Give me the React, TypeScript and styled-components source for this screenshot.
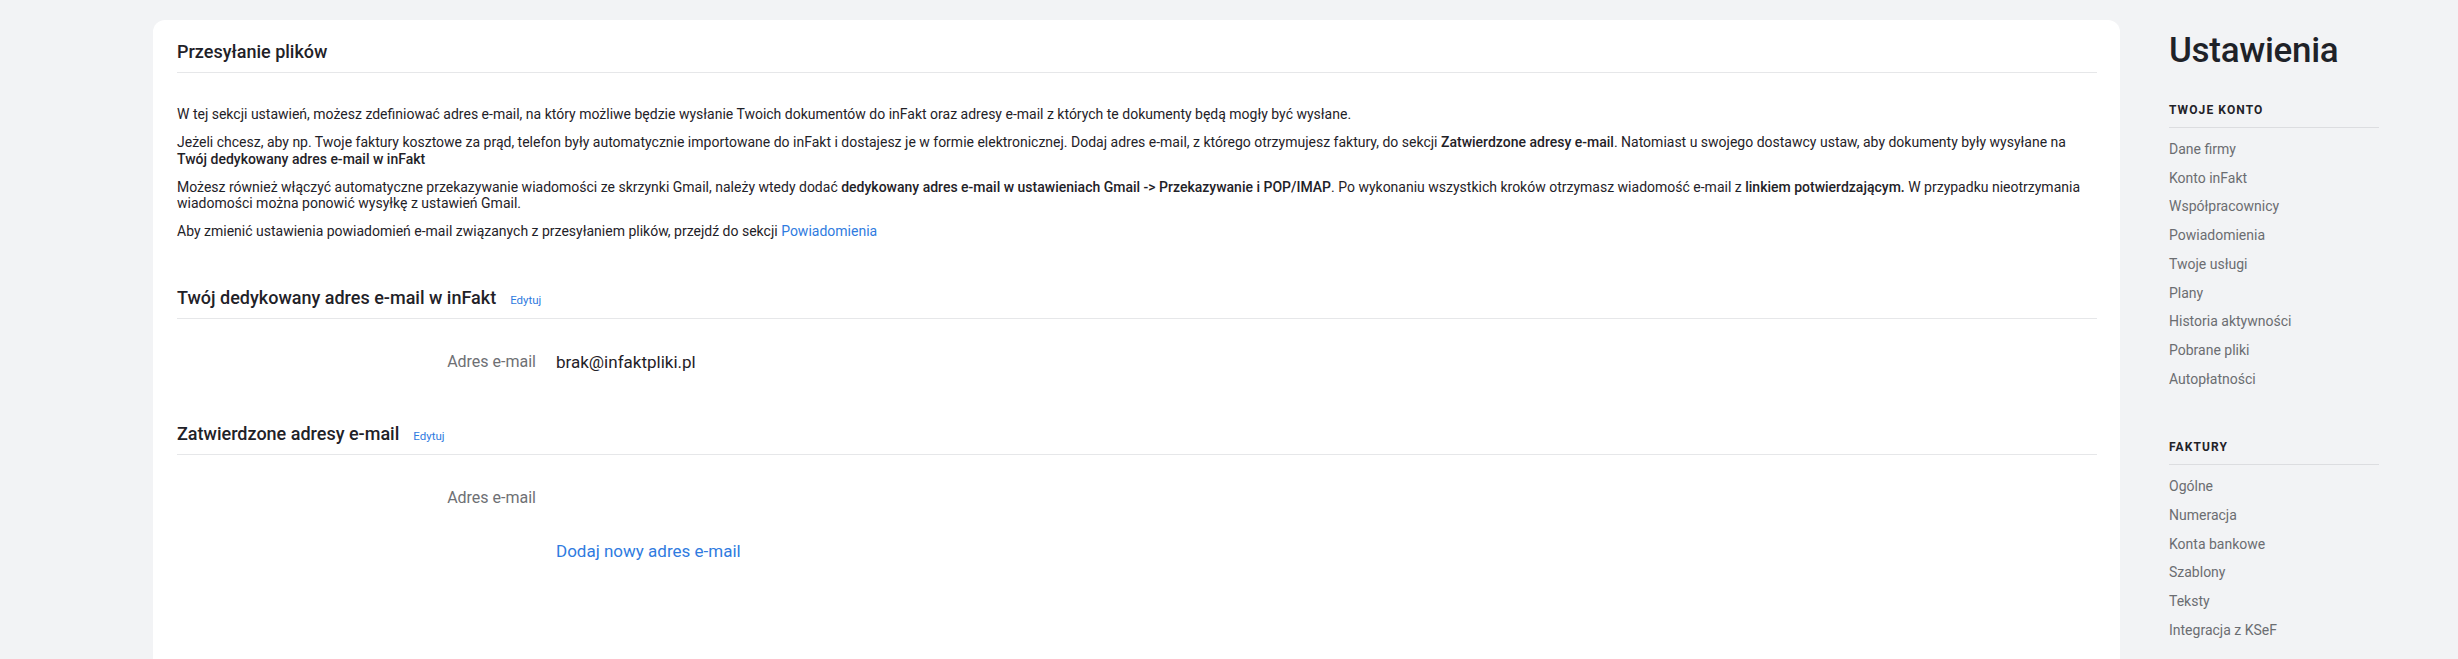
import styled, { createGlobalStyle } from "styled-components";

const GlobalStyle = createGlobalStyle`
  body {
    margin: 0;
    background: #f2f3f5;
    font-family: Roboto, "Liberation Sans", sans-serif;
    color: #1f2228;
  }
`;

const Page = styled.div`
  display: flex;
  align-items: flex-start;
  gap: 49px;
  padding: 20px 79px 0 153px;
  min-height: 659px;
  box-sizing: border-box;
`;

const Card = styled.main`
  flex: 1;
  min-width: 0;
  background: #fff;
  border-radius: 12px;
  padding: 20px 23px 60px 24px;
  min-height: 660px;
  box-sizing: border-box;
`;

const SectionHeader = styled.div<{ $top?: number }>`
  display: flex;
  align-items: baseline;
  gap: 14px;
  margin-top: ${(p) => p.$top ?? 0}px;
  padding-bottom: 8px;
  border-bottom: 1px solid #e6e7e9;
`;

const SectionTitle = styled.h2`
  margin: 0;
  font-size: 18px;
  line-height: 24px;
  font-weight: 500;
  color: #1f2228;
`;

const EditLink = styled.a`
  font-size: 11.5px;
  color: #2f7be0;
  text-decoration: none;
  cursor: pointer;
`;

const Intro = styled.div`
  margin-top: 33px;
  display: flex;
  flex-direction: column;
  gap: 11.5px;
`;

const Para = styled.p`
  margin: 0;
  font-size: 14px;
  line-height: 16.5px;
  color: #1f2228;

  b {
    font-weight: 500;
  }

  a {
    color: #2f7be0;
    text-decoration: none;
  }
`;

const FieldGrid = styled.div`
  display: grid;
  grid-template-columns: 359px 1fr;
  column-gap: 20px;
  row-gap: 29px;
  margin-top: 31px;
  line-height: 24px;
`;

const FieldLabel = styled.div`
  font-size: 16px;
  text-align: right;
  color: #6e7074;
`;

const FieldValue = styled.div`
  font-size: 17px;
  color: #1f2228;
`;

const AddLink = styled.a`
  grid-column: 2;
  font-size: 17px;
  color: #2f7be0;
  text-decoration: none;
  cursor: pointer;
`;

const Sidebar = styled.aside`
  width: 210px;
  flex-shrink: 0;
`;

const SideTitle = styled.h1`
  margin: 11px 0 0;
  font-size: 35px;
  line-height: 40px;
  font-weight: 500;
  letter-spacing: -0.3px;
  color: #1f2228;
`;

const MenuGroup = styled.nav<{ $top: number }>`
  margin-top: ${(p) => p.$top}px;
`;

const GroupLabel = styled.div`
  font-size: 12px;
  font-weight: 700;
  letter-spacing: 1.1px;
  line-height: 16px;
  color: #1f2228;
  padding-bottom: 9px;
  border-bottom: 1px solid #dcdde0;
`;

const MenuList = styled.ul`
  list-style: none;
  margin: 7px 0 0;
  padding: 0;
`;

const MenuItem = styled.li`
  font-size: 14px;
  line-height: 28.7px;
  color: #6b6d71;
  cursor: pointer;
`;

const accountItems = [
  "Dane firmy",
  "Konto inFakt",
  "Współpracownicy",
  "Powiadomienia",
  "Twoje usługi",
  "Plany",
  "Historia aktywności",
  "Pobrane pliki",
  "Autopłatności",
];

const invoiceItems = [
  "Ogólne",
  "Numeracja",
  "Konta bankowe",
  "Szablony",
  "Teksty",
  "Integracja z KSeF",
];

export default function App() {
  return (
    <>
      <GlobalStyle />
      <Page>
        <Card>
          <SectionHeader>
            <SectionTitle>Przesyłanie plików</SectionTitle>
          </SectionHeader>

          <Intro>
            <Para>
              W tej sekcji ustawień, możesz zdefiniować adres e-mail, na który możliwe będzie wysłanie Twoich
              dokumentów do inFakt oraz adresy e-mail z których te dokumenty będą mogły być wysłane.
            </Para>
            <Para>
              Jeżeli chcesz, aby np. Twoje faktury kosztowe za prąd, telefon były automatycznie importowane do inFakt i
              dostajesz je w formie elektronicznej. Dodaj adres e-mail, z którego otrzymujesz faktury, do sekcji{" "}
              <b>Zatwierdzone adresy e-mail</b>. Natomiast u swojego dostawcy ustaw, aby dokumenty były wysyłane na{" "}
              <b>Twój dedykowany adres e-mail w inFakt</b>
            </Para>
            <Para>
              Możesz również włączyć automatyczne przekazywanie wiadomości ze skrzynki Gmail, należy wtedy dodać{" "}
              <b>dedykowany adres e-mail w ustawieniach Gmail -&gt; Przekazywanie i POP/IMAP</b>. Po wykonaniu
              wszystkich kroków otrzymasz wiadomość e-mail z <b>linkiem potwierdzającym.</b> W przypadku
              nieotrzymania wiadomości można ponowić wysyłkę z ustawień Gmail.
            </Para>
            <Para>
              Aby zmienić ustawienia powiadomień e-mail związanych z przesyłaniem plików, przejdź do sekcji{" "}
              <a>Powiadomienia</a>
            </Para>
          </Intro>

          <SectionHeader $top={46}>
            <SectionTitle>Twój dedykowany adres e-mail w inFakt</SectionTitle>
            <EditLink>Edytuj</EditLink>
          </SectionHeader>
          <FieldGrid>
            <FieldLabel>Adres e-mail</FieldLabel>
            <FieldValue>brak@infaktpliki.pl</FieldValue>
          </FieldGrid>

          <SectionHeader $top={48}>
            <SectionTitle>Zatwierdzone adresy e-mail</SectionTitle>
            <EditLink>Edytuj</EditLink>
          </SectionHeader>
          <FieldGrid>
            <FieldLabel>Adres e-mail</FieldLabel>
            <FieldValue />
            <AddLink>Dodaj nowy adres e-mail</AddLink>
          </FieldGrid>
        </Card>

        <Sidebar>
          <SideTitle>Ustawienia</SideTitle>
          <MenuGroup $top={31}>
            <GroupLabel>TWOJE KONTO</GroupLabel>
            <MenuList>
              {accountItems.map((item) => (
                <MenuItem key={item}>{item}</MenuItem>
              ))}
            </MenuList>
          </MenuGroup>
          <MenuGroup $top={46}>
            <GroupLabel>FAKTURY</GroupLabel>
            <MenuList>
              {invoiceItems.map((item) => (
                <MenuItem key={item}>{item}</MenuItem>
              ))}
            </MenuList>
          </MenuGroup>
        </Sidebar>
      </Page>
    </>
  );
}
